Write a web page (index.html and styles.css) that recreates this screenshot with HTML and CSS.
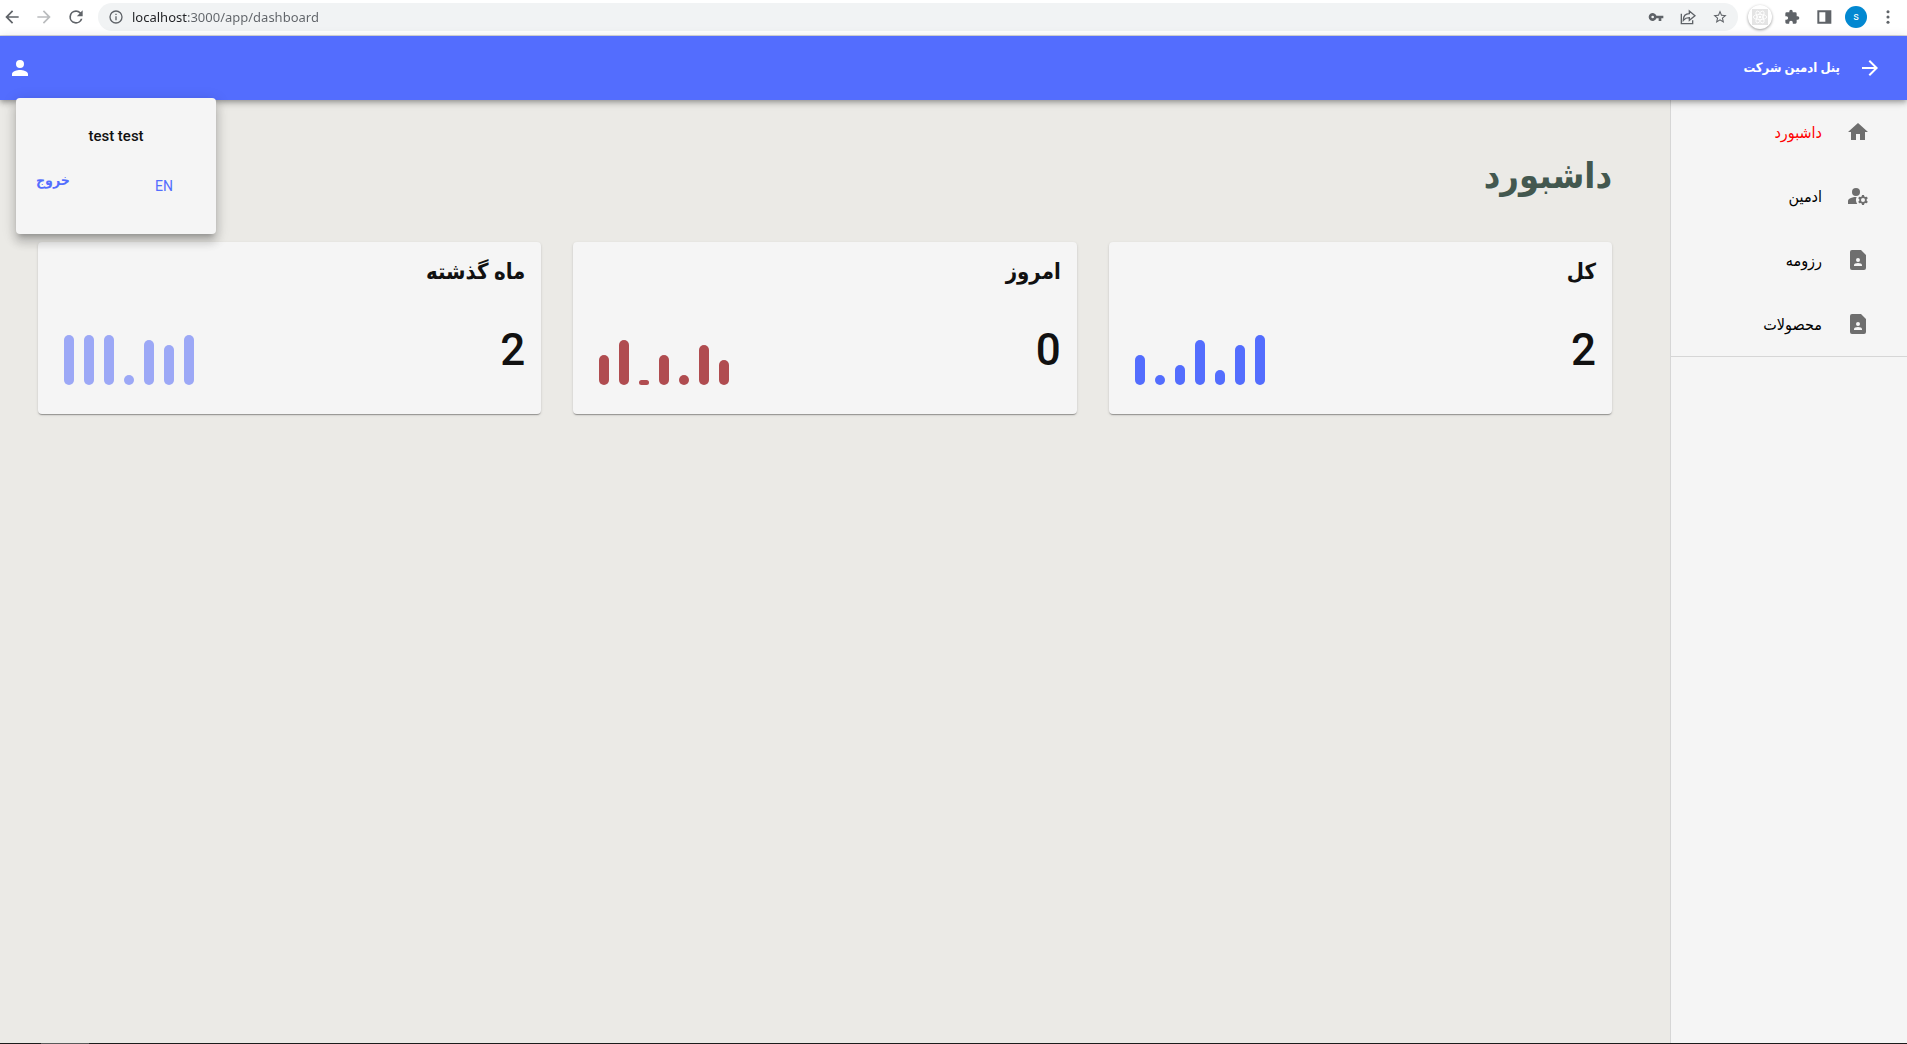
FILE: index.html
```html
<!DOCTYPE html>
<html lang="fa">
<head>
<meta charset="utf-8">
<meta name="viewport" content="width=device-width, initial-scale=1">
<title>داشبورد</title>
<link rel="stylesheet" href="styles.css">
</head>
<body>
<div class="browser-bar">
  <button class="tool" aria-label="Back"><svg viewBox="0 0 24 24"><path d="M20 11H7.83l5.59-5.59L12 4l-8 8 8 8 1.41-1.41L7.83 13H20z"/></svg></button>
  <button class="tool tool-off" aria-label="Forward"><svg viewBox="0 0 24 24"><path d="M12 4l-1.41 1.41L16.17 11H4v2h12.17l-5.58 5.59L12 20l8-8z"/></svg></button>
  <button class="tool" aria-label="Reload"><svg viewBox="0 0 24 24"><path d="M17.65 6.35A7.96 7.96 0 0 0 12 4a8 8 0 1 0 7.73 10h-2.08A6 6 0 1 1 12 6c1.66 0 3.14.69 4.22 1.78L13 11h7V4z"/></svg></button>
  <div class="address">
    <svg class="info" viewBox="0 0 24 24"><path d="M11 7h2v2h-2zm0 4h2v6h-2zm1-9a10 10 0 1 0 0 20 10 10 0 0 0 0-20zm0 18a8 8 0 1 1 0-16 8 8 0 0 1 0 16z"/></svg>
    <input class="url" type="text" aria-label="Address" value="localhost:3000/app/dashboard">
    <button class="tool small" aria-label="Passwords"><svg viewBox="0 0 24 24"><path d="M12.65 10a6 6 0 1 0 0 4H16v4h4v-4h3v-4zM7 14a2 2 0 1 1 0-4 2 2 0 0 1 0 4z"/></svg></button>
    <button class="tool small" aria-label="Share"><svg viewBox="0 0 24 24" class="line"><path d="M2 7v15h17v-5M14 3l8.500 7-8.500 7v-4c-4 0-6.500 1-9 4 0-6 3.500-10 9-10z"/></svg></button>
    <button class="tool small" aria-label="Bookmark"><svg viewBox="0 0 24 24"><path d="M22 9.24l-7.19-.62L12 2 9.19 8.63 2 9.24l5.46 4.73L5.82 21 12 17.27 18.18 21l-1.63-7.03zM12 15.4l-3.76 2.27 1-4.28-3.32-2.88 4.38-.38L12 6.1l1.71 4.04 4.38.38-3.32 2.88 1 4.28z"/></svg></button>
  </div>
  <button class="tool react" aria-label="React tools"><svg viewBox="0 0 24 24"><rect width="24" height="24" fill="#e4e4e4"/><g fill="none" stroke="#fff" stroke-width="1.300"><ellipse cx="12" cy="12" rx="10" ry="4"/><ellipse cx="12" cy="12" rx="10" ry="4" transform="rotate(60 12 12)"/><ellipse cx="12" cy="12" rx="10" ry="4" transform="rotate(120 12 12)"/></g><circle cx="12" cy="12" r="2" fill="#fff"/></svg></button>
  <button class="tool small" aria-label="Extensions"><svg viewBox="0 0 24 24"><path d="M20.5 11H19V7a2 2 0 0 0-2-2h-4V3.500a2.500 2.500 0 0 0-5 0V5H4a2 2 0 0 0-2 2v3.800h1.500a2.700 2.700 0 0 1 0 5.400H2V20a2 2 0 0 0 2 2h3.800v-1.500a2.700 2.700 0 0 1 5.400 0V22H17a2 2 0 0 0 2-2v-4h1.500a2.500 2.500 0 0 0 0-5z"/></svg></button>
  <button class="tool small" aria-label="Side panel"><svg viewBox="0 0 24 24"><path d="M2 2h21v20H2zm3 3v14h9V5z"/></svg></button>
  <button class="tool avatar" aria-label="Profile">s</button>
  <button class="tool small" aria-label="Menu"><svg viewBox="0 0 24 24"><circle cx="12" cy="4" r="2.300"/><circle cx="12" cy="12" r="2.300"/><circle cx="12" cy="20" r="2.300"/></svg></button>
</div>

<div class="app" dir="rtl">
  <header class="app-bar">
    <button class="bar-button" aria-label="بستن منو"><svg viewBox="0 0 24 24"><path d="M12 4l-1.410 1.410L16.170 11H4v2h12.170l-5.580 5.590L12 20l8-8z"/></svg></button>
    <h2 class="brand">پنل ادمین شرکت</h2>
    <button class="bar-button" aria-label="حساب کاربری"><svg viewBox="0 0 24 24"><path d="M12 12a4 4 0 1 0 0-8 4 4 0 0 0 0 8zm0 2c-2.670 0-8 1.340-8 4v2h16v-2c0-2.660-5.330-4-8-4z"/></svg></button>
    <div class="account">
      <p class="account-name">test test</p>
      <div class="account-actions">
        <button class="language">EN</button>
        <button class="logout">خروج</button>
      </div>
    </div>
  </header>

  <div class="body">
    <nav class="side">
      <ul class="menu">
        <li><a class="item active" href="#dashboard"><svg viewBox="0 0 24 24"><path d="M10 20v-6h4v6h5v-8h3L12 3 2 12h3v8z"/></svg>داشبورد</a></li>
        <li><a class="item" href="#admin"><svg viewBox="0 0 24 24"><circle cx="10" cy="8" r="4"/><path d="M10.670 13.020c-.22-.01-.44-.02-.67-.02-2.420 0-4.680.67-6.610 1.820-.88.52-1.390 1.500-1.390 2.530V20h9.260a6.960 6.960 0 0 1-.59-6.980zM20.750 16c0-.22-.03-.42-.06-.63l1.140-1.010-1-1.730-1.450.49c-.32-.27-.68-.48-1.080-.63L18 11h-2l-.3 1.490c-.4.15-.76.36-1.080.63l-1.450-.49-1 1.730 1.140 1.010c-.03.21-.06.410-.06.63s.03.420.06.630l-1.140 1.010 1 1.730 1.450-.49c.32.27.68.48 1.080.63L16 21h2l.3-1.490c.4-.15.76-.36 1.080-.63l1.450.49 1-1.730-1.140-1.010c.03-.21.06-.41.06-.63zM17 18a2 2 0 1 1 0-4 2 2 0 0 1 0 4z"/></svg>ادمین</a></li>
        <li><a class="item" href="#resume"><svg viewBox="0 0 24 24"><path d="M15 2H6a2 2 0 0 0-2 2v16a2 2 0 0 0 2 2h12a2 2 0 0 0 2-2V7zm-3 8a2 2 0 1 1 0 4 2 2 0 0 1 0-4zm4 8H8v-.57c0-.81.480-1.530 1.220-1.850a6.950 6.950 0 0 1 5.560 0c.74.32 1.220 1.040 1.220 1.850z"/></svg>رزومه</a></li>
        <li><a class="item" href="#products"><svg viewBox="0 0 24 24"><path d="M15 2H6a2 2 0 0 0-2 2v16a2 2 0 0 0 2 2h12a2 2 0 0 0 2-2V7zm-3 8a2 2 0 1 1 0 4 2 2 0 0 1 0-4zm4 8H8v-.57c0-.81.480-1.530 1.220-1.850a6.950 6.950 0 0 1 5.560 0c.74.32 1.220 1.040 1.220 1.850z"/></svg>محصولات</a></li>
      </ul>
    </nav>

    <main class="content">
      <h1 class="title">داشبورد</h1>
      <div class="cards">
        <section class="card">
          <h3 class="card-title">کل</h3>
          <div class="card-row">
            <span class="count">2</span>
            <div class="bars blue" dir="ltr"><i style="height:30px"></i><i style="height:10px"></i><i style="height:20px"></i><i style="height:45px"></i><i style="height:15px"></i><i style="height:40px"></i><i style="height:50px"></i></div>
          </div>
        </section>
        <section class="card">
          <h3 class="card-title">امروز</h3>
          <div class="card-row">
            <span class="count">0</span>
            <div class="bars red" dir="ltr"><i style="height:30px"></i><i style="height:45px"></i><i style="height:5px"></i><i style="height:30px"></i><i style="height:10px"></i><i style="height:40px"></i><i style="height:25px"></i></div>
          </div>
        </section>
        <section class="card">
          <h3 class="card-title">ماه گذشته</h3>
          <div class="card-row">
            <span class="count">2</span>
            <div class="bars pale" dir="ltr"><i style="height:50px"></i><i style="height:50px"></i><i style="height:50px"></i><i style="height:10px"></i><i style="height:45px"></i><i style="height:40px"></i><i style="height:50px"></i></div>
          </div>
        </section>
      </div>
    </main>
  </div>
</div>
<div class="taskbar"><span class="task"></span></div>
</body>
</html>
```
FILE: styles.css
```css
* {
  box-sizing: border-box;
}

body {
  margin: 0;
  min-height: 100vh;
  display: flex;
  flex-direction: column;
  background: #ebeae6;
  color: #111;
  font-family: Roboto, "DejaVu Sans Condensed", "DejaVu Sans", sans-serif;
  font-size: 14px;
}

h1, h2, h3, p, ul {
  margin: 0;
  padding: 0;
}

button {
  padding: 0;
  border: 0;
  background: none;
  color: inherit;
  font: inherit;
  cursor: pointer;
}

svg {
  display: block;
  fill: currentColor;
}

/* Browser toolbar */

.browser-bar {
  display: flex;
  align-items: center;
  height: 36px;
  padding: 0 3px 2px 0;
  border-bottom: 1px solid #d8d9dc;
  background: #fff;
  color: #5f6368;
}

.tool {
  display: flex;
  flex: none;
  align-items: center;
  justify-content: center;
  width: 32px;
  height: 28px;
}

.browser-bar > .tool:first-child {
  width: 28px;
  padding-right: 4px;
}

.tool svg {
  width: 20px;
  height: 20px;
}

.tool.small svg {
  width: 16px;
  height: 16px;
}

.tool-off {
  color: #babcbe;
}

.tool .line {
  fill: none;
  stroke: currentColor;
  stroke-width: 2;
}

.address {
  display: flex;
  flex: 1;
  align-items: center;
  height: 28px;
  margin: 0 6px;
  padding: 0 2px 0 10px;
  border-radius: 14px;
  background: #f1f3f4;
}

.info {
  width: 16px;
  height: 16px;
}

.url {
  flex: 1;
  min-width: 0;
  height: 28px;
  margin-left: 8px;
  padding: 0;
  border: 0;
  outline: 0;
  background: linear-gradient(90deg, #202124 56px, #5f6368 56px);
  background-clip: text;
  -webkit-text-fill-color: transparent;
  font-family: "Noto Sans", sans-serif;
  font-size: 13px;
}

.tool.react {
  width: 24px;
  height: 24px;
  margin: 0 4px;
  border-radius: 50%;
  box-shadow: 0 1px 3px rgba(0, 0, 0, .4);
}

.tool.react svg {
  width: 16px;
  height: 16px;
}

.tool.avatar {
  width: 22px;
  height: 22px;
  margin: 0 5px;
  border-radius: 50%;
  background: #0288d1;
  color: #fff;
  font-size: 11px;
}

/* Application header */

.app {
  display: flex;
  flex: 1;
  flex-direction: column;
}

.app-bar {
  position: relative;
  z-index: 1;
  display: flex;
  align-items: center;
  height: 64px;
  padding: 0 25px 0 8px;
  background: #536dfe;
  color: #fff;
  box-shadow: 0 2px 4px -1px rgba(0, 0, 0, .2), 0 4px 5px rgba(0, 0, 0, .14), 0 1px 10px rgba(0, 0, 0, .12);
}

.bar-button svg {
  width: 24px;
  height: 24px;
}

.brand {
  flex: 1;
  margin-right: 18px;
  font-size: 13px;
  line-height: 20px;
}

.account {
  position: absolute;
  top: 62px;
  left: 16px;
  width: 200px;
  height: 136px;
  padding: 28px 20px 0;
  border-radius: 4px;
  background: #f5f5f5;
  color: #536dfe;
  box-shadow: 0 5px 5px -3px rgba(0, 0, 0, .2), 0 8px 10px 1px rgba(0, 0, 0, .14), 0 3px 14px 2px rgba(0, 0, 0, .12);
}

.account-name {
  margin-bottom: 24px;
  color: #111;
  font-size: 15px;
  font-weight: 500;
  line-height: 20px;
  text-align: center;
}

.account-actions {
  display: flex;
  justify-content: space-between;
}

.language {
  height: 20px;
  margin: 6px 23px 0 0;
}

.logout {
  height: 20px;
  font-weight: 700;
}

/* Side menu and content */

.body {
  display: flex;
  flex: 1;
}

.side {
  flex: none;
  width: 237px;
  border-left: 1px solid #d6d6d6;
  background: #f5f5f5;
}

.menu {
  list-style: none;
  border-bottom: 1px solid #d6d6d6;
}

.item {
  display: flex;
  align-items: center;
  gap: 24px;
  height: 64px;
  padding-right: 37px;
  color: #000;
  font-size: 16px;
  text-decoration: none;
}

.item svg {
  width: 24px;
  height: 24px;
  color: #6e6e6e;
}

.item.active {
  color: #f00;
}

.content {
  flex: 1;
  padding: 48px 58px 48px 38px;
}

.title {
  margin-bottom: 38px;
  color: #43584f;
  font-size: 36px;
  line-height: 56px;
}

.cards {
  display: grid;
  grid-template-columns: repeat(3, 1fr);
  gap: 32px;
}

.card {
  padding: 12px 16px 28px 26px;
  border-radius: 4px;
  background: #f5f5f5;
  box-shadow: 0 2px 1px -1px rgba(0, 0, 0, .2), 0 1px 1px rgba(0, 0, 0, .14), 0 1px 3px rgba(0, 0, 0, .12);
}

.card-title {
  margin-bottom: 36px;
  font-size: 22px;
  line-height: 36px;
}

.card-row {
  display: flex;
  justify-content: space-between;
  height: 60px;
}

.count {
  font-size: 44px;
  font-weight: 500;
  line-height: 48px;
}

.bars {
  display: flex;
  align-items: flex-end;
  gap: 10px;
  padding-bottom: 1px;
}

.bars i {
  width: 10px;
  border-radius: 5px;
  background: currentColor;
}

.blue {
  color: #536dfe;
}

.red {
  color: #b04c50;
}

.pale {
  color: #9ca8f6;
}

.taskbar {
  height: 1px;
  padding-left: 41px;
  background: #1c1c1c;
}

.task {
  display: block;
  width: 48px;
  height: 1px;
  background: #5a5a5a;
}
```
